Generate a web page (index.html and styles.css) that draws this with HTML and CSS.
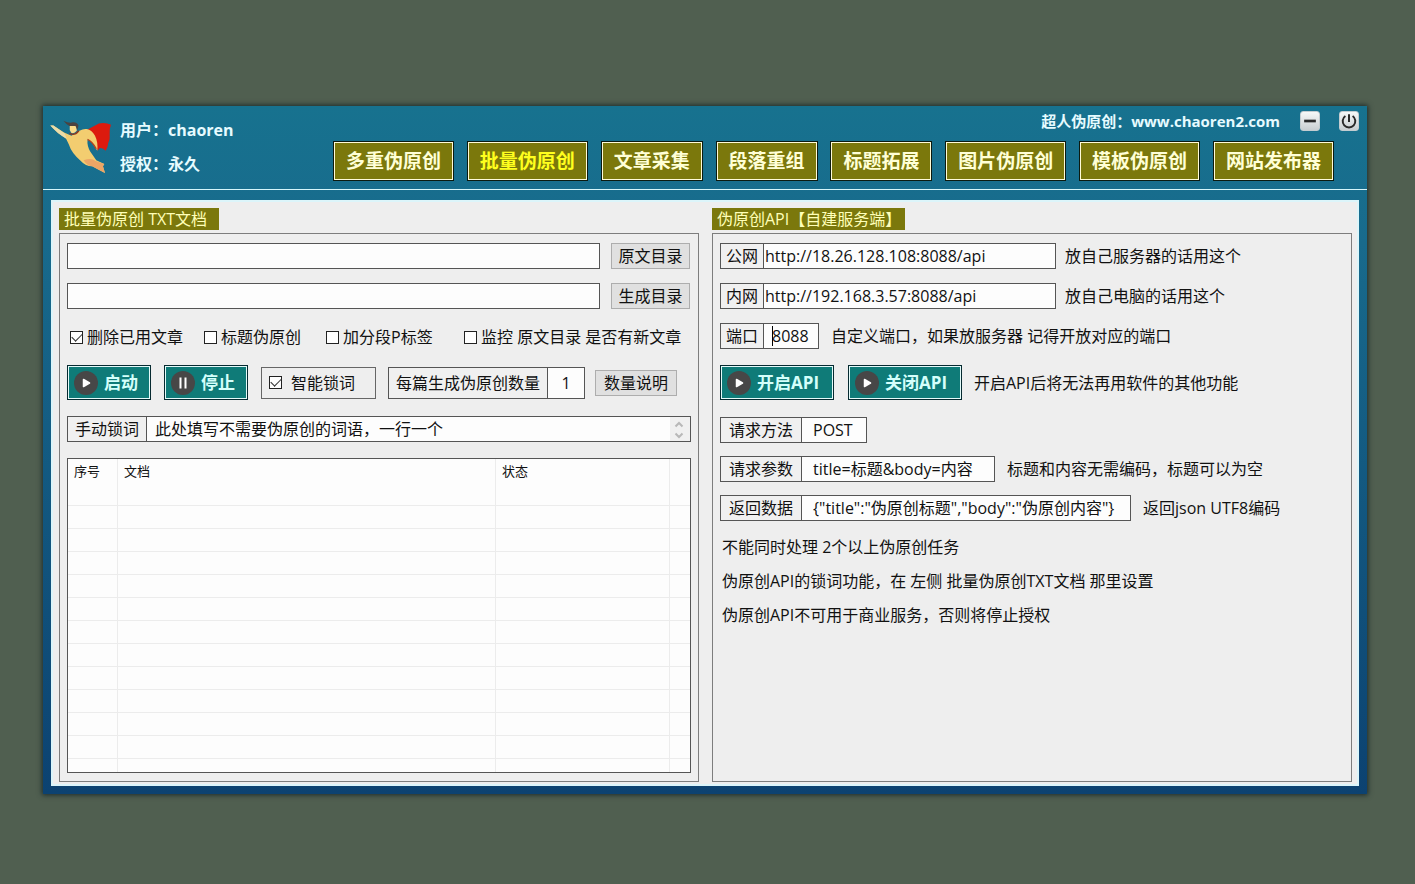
FILE: index.html
```html
<!DOCTYPE html>
<html lang="zh-CN">
<head>
<meta charset="utf-8">
<title>超人伪原创</title>
<link rel="stylesheet" href="styles.css">
</head>
<body>
<svg class="defs" aria-hidden="true">
  <symbol id="play" viewBox="0 0 24 24"><circle cx="12" cy="12" r="12" fill="#474747"/><path d="M9.500 8.500 L15.500 12 L9.500 15.500 Z" fill="#fff" stroke="#fff" stroke-width="1.5" stroke-linejoin="round"/></symbol>
  <symbol id="pause" viewBox="0 0 24 24"><circle cx="12" cy="12" r="12" fill="#474747"/><path d="M9.500 6.500 V17.500 M14.500 6.500 V17.500" stroke="#fff" stroke-width="2"/></symbol>
</svg>
<main class="window">
  <header class="header">
    <div class="account">
      <svg class="logo" viewBox="40 60 185 170" aria-hidden="true">
        <path d="M152 94 L186 76 Q206 72 222 80 Q216 94 218 108 Q220 122 214 134 Q213 146 206 158 Q198 148 188 150 L182 158 Q170 112 152 94 Z" fill="#dc1a0e"/>
        <path d="M41 82 L50 82 L82 103 L104 113 Q120 103 128 98 Q140 91 150 93 Q164 96 174 112 Q184 132 181 158 Q174 144 162 130 L152 124 Q150 142 160 160 L178 186 L202 197 L198 204 L204 224 L184 214 L166 204 Q146 204 132 188 Q104 164 96 138 L88 122 Q62 106 41 82 Z" fill="#f3cd70"/>
        <path d="M140 186 Q164 178 176 188 L202 197 L198 204 L204 224 L184 214 L166 204 Q152 204 140 186 Z" fill="#eda566"/>
        <path d="M41 82 L50 82 L84 106 L90 122 Q62 106 41 82 Z" fill="#eadcaa"/>
        <path d="M99 84 Q108 76 118 83 L120 98 Q112 108 103 104 Q97 96 99 84 Z" fill="#fbdc8a"/>
        <path d="M80 68 Q96 76 108 73 Q120 72 125 82 L122 96 L116 84 L98 84 Q88 78 80 68 Z" fill="#4b4340"/>
        <path d="M98 106 Q114 114 126 98" stroke="#8e3b20" stroke-width="4" fill="none"/>
        <path d="M152 124 Q166 130 178 152" stroke="#b8431c" stroke-width="4" fill="none"/>
      </svg>
      <div class="user">
        <span>用户：chaoren</span>
        <span>授权：永久</span>
      </div>
    </div>
    <div class="header-main">
      <div class="titlebar">
        <h1 class="title">超人伪原创：www.chaoren2.com</h1>
        <button class="win-btn" type="button" aria-label="最小化"><svg viewBox="0 0 20 20"><path d="M3.5 10 H16.5" stroke="#292929" stroke-width="3"/></svg></button>
        <button class="win-btn" type="button" aria-label="关闭"><svg viewBox="0 0 20 20"><path d="M6 4.500 A7 7 0 1 0 14 4.500 M10 2.500 V11" stroke="#292929" stroke-width="2.200" fill="none"/></svg></button>
      </div>
      <nav class="nav">
        <button type="button">多重伪原创</button>
        <button type="button" class="active">批量伪原创</button>
        <button type="button">文章采集</button>
        <button type="button">段落重组</button>
        <button type="button">标题拓展</button>
        <button type="button">图片伪原创</button>
        <button type="button">模板伪原创</button>
        <button type="button">网站发布器</button>
      </nav>
    </div>
  </header>

  <div class="content">
    <section class="panel">
      <h2 class="tag tag-docs">批量伪原创 TXT文档</h2>
      <div class="box">
        <div class="row dir"><input class="text" type="text" aria-label="原文目录"><button class="btn" type="button">原文目录</button></div>
        <div class="row dir"><input class="text" type="text" aria-label="生成目录"><button class="btn" type="button">生成目录</button></div>
        <div class="checks">
          <label><input type="checkbox" checked>删除已用文章</label>
          <label><input type="checkbox">标题伪原创</label>
          <label><input type="checkbox">加分段P标签</label>
          <label><input type="checkbox">监控 原文目录 是否有新文章</label>
        </div>
        <div class="row actions">
          <button class="action" type="button"><svg><use href="#play"/></svg>启动</button>
          <button class="action" type="button"><svg><use href="#pause"/></svg>停止</button>
          <label class="smart"><input type="checkbox" checked>智能锁词</label>
          <div class="field count"><label for="count">每篇生成伪原创数量</label><input id="count" type="text" value="1"></div>
          <button class="btn help" type="button">数量说明</button>
        </div>
        <div class="field words">
          <label for="words">手动锁词</label>
          <textarea id="words" rows="1">此处填写不需要伪原创的词语，一行一个</textarea>
          <span class="scroll"><svg viewBox="0 0 17 24" aria-hidden="true"><path d="M5.500 9.500 L9 6 L12.500 9.500 M5.500 16.500 L9 20 L12.500 16.500" fill="none" stroke="#b8b8b8" stroke-width="2"/></svg></span>
        </div>
        <div class="grid">
          <table>
            <colgroup><col class="c-no"><col><col class="c-state"><col class="c-end"></colgroup>
            <thead><tr><th>序号</th><th>文档</th><th>状态</th><th></th></tr></thead>
            <tbody>
              <tr><td></td><td></td><td></td><td></td></tr>
              <tr><td></td><td></td><td></td><td></td></tr>
              <tr><td></td><td></td><td></td><td></td></tr>
              <tr><td></td><td></td><td></td><td></td></tr>
              <tr><td></td><td></td><td></td><td></td></tr>
              <tr><td></td><td></td><td></td><td></td></tr>
              <tr><td></td><td></td><td></td><td></td></tr>
              <tr><td></td><td></td><td></td><td></td></tr>
              <tr><td></td><td></td><td></td><td></td></tr>
              <tr><td></td><td></td><td></td><td></td></tr>
              <tr><td></td><td></td><td></td><td></td></tr>
              <tr><td></td><td></td><td></td><td></td></tr>
              <tr class="rest"><td></td><td></td><td></td><td></td></tr>
            </tbody>
          </table>
        </div>
      </div>
    </section>

    <section class="panel">
      <h2 class="tag">伪原创API【自建服务端】</h2>
      <div class="box">
        <div class="row"><div class="field url"><label for="wan">公网</label><input id="wan" type="text" value="http://18.26.128.108:8088/api"></div><span class="note near">放自己服务器的话用这个</span></div>
        <div class="row"><div class="field url"><label for="lan">内网</label><input id="lan" type="text" value="http://192.168.3.57:8088/api"></div><span class="note near">放自己电脑的话用这个</span></div>
        <div class="row port-row"><div class="field port"><label for="port">端口</label><input id="port" type="text" value="8088"></div><span class="note">自定义端口，如果放服务器 记得开放对应的端口</span></div>
        <div class="row api-actions">
          <button class="action wide" type="button"><svg><use href="#play"/></svg>开启API</button>
          <button class="action wide" type="button"><svg><use href="#play"/></svg>关闭API</button>
          <span class="note">开启API后将无法再用软件的其他功能</span>
        </div>
        <div class="spec">
          <div class="row"><div class="field method"><label for="method">请求方法</label><input id="method" type="text" readonly value="POST"></div></div>
          <div class="row"><div class="field params"><label for="params">请求参数</label><input id="params" type="text" readonly value="title=标题&amp;body=内容"></div><span class="note">标题和内容无需编码，标题可以为空</span></div>
          <div class="row"><div class="field result"><label for="result">返回数据</label><input id="result" type="text" readonly value='{"title":"伪原创标题","body":"伪原创内容"}'></div><span class="note">返回json UTF8编码</span></div>
        </div>
        <div class="remarks">
          <p>不能同时处理 2个以上伪原创任务</p>
          <p>伪原创API的锁词功能，在 左侧 批量伪原创TXT文档 那里设置</p>
          <p>伪原创API不可用于商业服务，否则将停止授权</p>
        </div>
      </div>
    </section>
  </div>
</main>
</body>
</html>
```
FILE: styles.css
```css
* { box-sizing: border-box; }

body {
  margin: 0;
  min-height: 100vh;
  padding: 106px 48px 90px 43px;
  background: #505f50;
  color: #111;
  font: 16px/24px "Open Sans", "Noto Sans CJK SC", sans-serif;
}

button, input, textarea { font: inherit; color: inherit; margin: 0; }
h1, h2, p { margin: 0; font-size: inherit; font-weight: normal; }
.defs { position: absolute; width: 0; height: 0; }

.window {
  padding-bottom: 8px;
  background: linear-gradient(#17728f, #186a8c 20%, #0c4271);
  box-shadow: 0 0 5px 1px #1b2a2a;
}

/* Header */
.header {
  display: flex;
  height: 84px;
  border-bottom: 1px solid #d5f6fb;
  color: #e6fbff;
  font-weight: bold;
}
.account { display: flex; flex: 0 0 290px; padding: 12px 0 0 7px; }
.logo { width: 62px; height: 57px; }
.user { display: flex; flex-direction: column; gap: 10px; margin-left: 8px; }
.header-main { flex: 1; padding-right: 33px; }
.titlebar {
  display: flex;
  justify-content: flex-end;
  align-items: center;
  gap: 19px;
  height: 30px;
  margin: 0 -25px 5px 0;
}
.title { margin-right: 1px; font-size: 15px; font-weight: bold; }
.win-btn {
  display: flex;
  width: 20px;
  height: 20px;
  padding: 0;
  border: 1px solid #c3ccd0;
  border-radius: 3px;
  background: linear-gradient(#f6f8f8, #c9ced1);
}
.win-btn svg { width: 18px; height: 18px; }
.nav { display: flex; justify-content: space-between; }
.nav button {
  height: 40px;
  padding: 0 12px;
  border: 1px solid #0b1a10;
  background: #7b780c;
  box-shadow: inset 0 0 0 1px #fffbd8;
  color: #ffffd6;
  font-size: 19px;
  font-weight: bold;
  white-space: nowrap;
}
.nav .active { color: #ffff1e; }

/* Content */
.content {
  display: grid;
  grid-template-columns: 1fr 1fr;
  gap: 13px;
  margin: 10px 8px 0;
  padding: 8px 7px 4px 8px;
  background: #eee;
  box-shadow: inset 0 0 0 2px #dcf5fa;
}
.panel { display: flex; flex-direction: column; align-items: flex-start; gap: 3px; min-width: 0; }
.tag {
  padding: 0 4px 0 5px;
  height: 22px;
  line-height: 22px;
  background: #7b780c;
  color: #ffffb8;
}
.tag-docs { padding-right: 12px; }
.box {
  display: flex;
  flex: 1;
  flex-direction: column;
  gap: 14px;
  align-self: stretch;
  padding: 9px 7px 8px;
  border: 1px solid #7d7d7d;
}
.row { display: flex; align-items: center; }

.text, .field {
  height: 26px;
  border: 1px solid #555;
  background: #fdfdfd;
}
.text { flex: 1; min-width: 0; }
.dir { gap: 11px; padding-right: 1px; }
.btn {
  width: 79px;
  height: 26px;
  padding: 0;
  border: 1px solid #adadad;
  background: #e0e0e0;
  line-height: 22px;
}

.checks {
  display: grid;
  grid-template-columns: 134px 122px 138px 1fr;
  height: 28px;
  padding-left: 3px;
  align-items: center;
}
.checks label, .smart { display: flex; align-items: center; white-space: nowrap; }
.checks label { gap: 4px; }
input[type="checkbox"] {
  appearance: none;
  position: relative;
  width: 13px;
  height: 13px;
  border: 1px solid #222;
  background: #fff;
}
input[type="checkbox"]:checked::after {
  content: "";
  position: absolute;
  left: 1px;
  top: 1px;
  width: 9px;
  height: 5px;
  border: solid #333;
  border-width: 0 0 1px 1px;
  transform: rotate(-45deg);
}

.action {
  display: flex;
  align-items: center;
  gap: 6px;
  width: 84px;
  height: 35px;
  padding: 0 6px;
  border: 1px solid #062a30;
  background: #0f7b78;
  box-shadow: inset 0 0 0 1px #e4fbfa;
  color: #d4fffb;
  font-size: 17px;
  font-weight: bold;
  white-space: nowrap;
}
.action svg { flex: none; width: 24px; height: 24px; }
.wide { width: 114px; }
.smart {
  gap: 9px;
  width: 115px;
  height: 32px;
  margin-left: 13px;
  padding-left: 7px;
  border: 1px solid #666;
}
.action + .action { margin-left: 13px; }
.api-actions .action + .action { margin-left: 14px; }

.field { display: flex; }
.field label {
  flex: none;
  padding: 0 5px;
  border-right: 1px solid #555;
  background: #f0f0f0;
  white-space: nowrap;
}
.field input, .field textarea {
  flex: 1;
  min-width: 0;
  padding: 0;
  border: 0;
  background: transparent;
  outline: 0;
}
.count { width: 197px; height: 32px; margin-left: 12px; line-height: 30px; }
.count label { padding: 0 7px; }
.count input { text-align: center; }
.help { width: 82px; margin-left: 10px; }
.words { margin: 2px 0; }
.words label { padding: 0 7px; }
.words textarea { height: 24px; padding-left: 8px; resize: none; overflow: hidden; }
.scroll { flex: none; width: 20px; background: #f0f0f0; }
.scroll svg { display: block; width: 17px; height: 24px; }

/* Document list */
.grid { flex: 1; border: 1px solid #555; background: #fdfdfd; }
table { width: 100%; border-collapse: separate; border-spacing: 0; table-layout: fixed; }
.c-no { width: 50px; }
.c-state { width: 174px; }
.c-end { width: 20px; }
th, td { height: 23px; padding: 0; border-right: 1px solid #ececec; }
th { height: 24px; padding-left: 6px; font-size: 13px; font-weight: normal; line-height: 23px; text-align: left; }
td { border-bottom: 1px solid #ececec; }
th:last-child, td:last-child { border-right: 0; }
.rest td { height: 13px; border-bottom: 0; }

/* API panel */
.note { margin-left: 12px; white-space: nowrap; }
.near { margin-left: 9px; }
.url { width: 336px; }
.url input { padding-left: 1px; }
.port { width: 99px; }
.port input {
  padding-left: 8px;
  background: linear-gradient(#000, #000) 8px 2px / 1px 20px no-repeat;
}
.port-row { height: 26px; margin-bottom: 2px; }
.spec { display: flex; flex-direction: column; gap: 13px; margin-top: 3px; }
.spec label { padding: 0 8px; }
.spec .field input { padding-left: 11px; }
.method { width: 147px; }
.params { width: 275px; }
.result { width: 411px; }
.remarks { display: flex; flex-direction: column; gap: 10px; padding-left: 2px; }
```
